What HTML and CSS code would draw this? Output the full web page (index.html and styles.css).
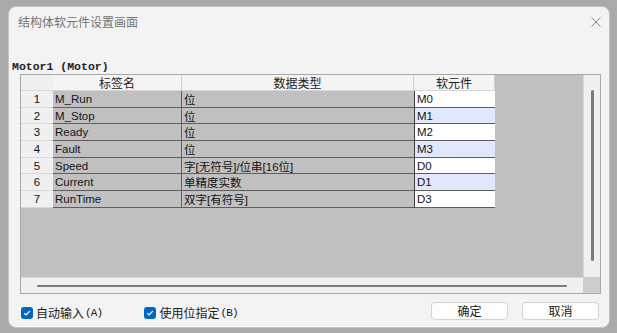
FILE: index.html
```html
<!DOCTYPE html>
<html lang="zh-CN">
<head>
  <meta charset="UTF-8" />
  <meta name="viewport" content="width=device-width, initial-scale=1.0"/>
  <title>结构体软元件设置画面</title>
  <link rel="stylesheet" href="styles.css">
</head>
<body>

  <div class="dialog">
    <div class="titlebar">
      <span class="title">结构体软元件设置画面</span>
      <svg class="close" width="10" height="10" viewBox="0 0 10 10">
        <path d="M0.5 0.5 L9.5 9.5 M9.5 0.5 L0.5 9.5" stroke="#8a8a8a" stroke-width="1" fill="none"/>
      </svg>
    </div>

    <div class="caption">Motor1 (Motor)</div>

    <div class="frame">
      <div class="viewport">
        <div class="grid">
          <div class="hd num"></div>
          <div class="hd">标签名</div>
          <div class="hd">数据类型</div>
          <div class="hd">软元件</div>

          <div class="num">1</div><div class="lbl">M_Run</div><div class="typ">位</div><div class="dev">M0</div>
          <div class="num">2</div><div class="lbl">M_Stop</div><div class="typ">位</div><div class="dev alt">M1</div>
          <div class="num">3</div><div class="lbl">Ready</div><div class="typ">位</div><div class="dev">M2</div>
          <div class="num">4</div><div class="lbl">Fault</div><div class="typ">位</div><div class="dev alt">M3</div>
          <div class="num">5</div><div class="lbl">Speed</div><div class="typ">字[无符号]/位串[16位]</div><div class="dev">D0</div>
          <div class="num">6</div><div class="lbl">Current</div><div class="typ">单精度实数</div><div class="dev alt">D1</div>
          <div class="num">7</div><div class="lbl">RunTime</div><div class="typ">双字[有符号]</div><div class="dev">D3</div>
        </div>
      </div>
      <div class="vscroll"><div class="vthumb"></div></div>
      <div class="hscroll"><div class="hthumb"></div></div>
      <div class="corner"></div>
    </div>

    <div class="footer">
      <label class="check">
        <span class="box"><svg width="12" height="12" viewBox="0 0 12 12"><path d="M3.2 6.2 L5.1 8 L8.8 4.2" stroke="#fff" stroke-width="1.2" fill="none"/></svg></span>
        自动输入<span class="key">(A)</span>
      </label>
      <label class="check second">
        <span class="box"><svg width="12" height="12" viewBox="0 0 12 12"><path d="M3.2 6.2 L5.1 8 L8.8 4.2" stroke="#fff" stroke-width="1.2" fill="none"/></svg></span>
        使用位指定<span class="key">(B)</span>
      </label>
      <div class="buttons">
        <button class="btn">确定</button>
        <button class="btn">取消</button>
      </div>
    </div>
  </div>

</body>
</html>
```

FILE: styles.css
```css
body {
  margin: 0;
  padding: 0;
  background: #a9a9a9;
  font-family: "Liberation Sans", "Noto Sans CJK SC", sans-serif;
  width: 617px;
  height: 333px;
  overflow: hidden;
}

.dialog {
  margin: 6px 0 0 8px;
  width: 602px;
  height: 322px;
  box-sizing: border-box;
  background: #f3f3f3;
  border: 1px solid #c4c4c4;
  border-radius: 8px;
  display: flex;
  flex-direction: column;
}

.titlebar {
  height: 29px;
  display: flex;
  align-items: center;
  justify-content: space-between;
  padding: 0 8px 0 9px;
}

.title {
  font-family: "Noto Sans CJK SC", sans-serif;
  font-size: 12px;
  color: #747474;
}

.caption {
  margin: 24px 0 0 3px;
  height: 14px;
  line-height: 14px;
  font-family: "Liberation Mono", monospace;
  font-size: 11.5px;
  font-weight: bold;
  color: #222;
}

.frame {
  margin-left: 11px;
  width: 581px;
  height: 220px;
  box-sizing: border-box;
  border: 1px solid #a8a8a8;
  display: grid;
  grid-template-columns: 1fr 17px;
  grid-template-rows: 1fr 16px;
}

.viewport {
  background: #c0c0c0;
  overflow: hidden;
}

.grid {
  display: grid;
  grid-template-columns: 32px 129px 232px 81px;
  grid-template-rows: 16px repeat(7, 16.7px);
  font-size: 11.5px;
  color: #141414;
}

.grid > div {
  box-sizing: border-box;
  white-space: nowrap;
  overflow: hidden;
  display: flex;
  align-items: center;
  padding-left: 2px;
}

.grid .hd {
  background: #f4f4f4;
  border-right: 1px solid #cfcfcf;
  border-bottom: 1px solid #d6d6d6;
  justify-content: center;
  padding-left: 0;
  font-family: "Noto Sans CJK SC", sans-serif;
  font-size: 12px;
  color: #222;
}

.grid .num {
  background: #f0f0f0;
  border-bottom: 1px solid #d8d8d8;
  justify-content: center;
  padding-left: 0;
}

.grid .hd.num {
  border-right: none;
}

.grid .lbl {
  background: #c0c0c0;
  border-bottom: 1px solid #5e5e5e;
  border-right: 1px solid #5e5e5e;
}

.grid .typ {
  background: #c0c0c0;
  border-bottom: 1px solid #5e5e5e;
}

.grid .dev {
  background: #ffffff;
  border-left: 1px solid #3c3c3c;
  border-bottom: 1px solid #5e5e5e;
}

.grid .dev.alt {
  background: #e2e8fb;
}

.vscroll {
  background: #f0f0f0;
  border-left: 1px solid #d8d8d8;
  box-sizing: border-box;
  padding: 15px 0 16px 7px;
}

.vthumb {
  width: 3px;
  height: 100%;
  background: #7a7a7a;
  border-radius: 2px;
}

.hscroll {
  background: #f0f0f0;
  border-top: 1px solid #d8d8d8;
  display: flex;
  align-items: center;
  padding: 1px 16px 0 16px;
}

.hthumb {
  flex: 1;
  height: 2px;
  background: #7a7a7a;
  border-radius: 1px;
}

.corner {
  background: #cdcdcd;
}

.footer {
  display: flex;
  align-items: flex-start;
  margin-top: 8px;
  padding: 0 10px 0 12px;
}

.check {
  display: flex;
  align-items: center;
  margin-top: 5px;
  font-family: "Noto Sans CJK SC", sans-serif;
  font-size: 12px;
  color: #1a1a1a;
  line-height: 12px;
}

.check.second {
  margin-left: 42px;
}

.box {
  width: 12px;
  height: 12px;
  background: #0067c0;
  border-radius: 3px;
  margin-right: 3px;
  display: flex;
}

.key {
  font-family: "Liberation Mono", monospace;
  font-size: 11px;
  margin-left: 1px;
  letter-spacing: -0.8px;
}

.buttons {
  margin-left: auto;
  display: flex;
  gap: 14px;
}

.btn {
  width: 77px;
  height: 18px;
  padding: 0;
  background: #fdfdfd;
  border: 1px solid #d4d4d4;
  border-radius: 4px;
  font-family: "Noto Sans CJK SC", sans-serif;
  font-size: 12px;
  line-height: 16px;
  color: #1a1a1a;
}
```
